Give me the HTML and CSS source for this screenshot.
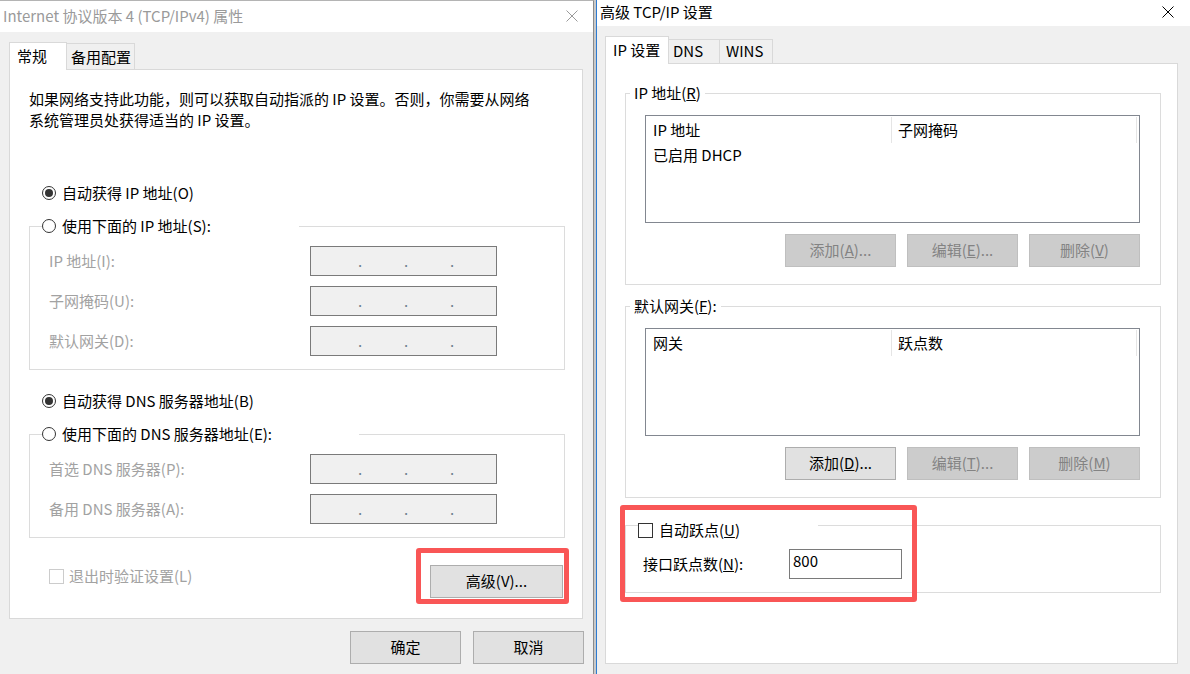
FILE: index.html
```html
<!DOCTYPE html>
<html lang="zh-CN">
<head>
<meta charset="utf-8">
<title>TCP/IP</title>
<link rel="stylesheet" href="styles.css">
</head>
<body>
<div class="page">
  <div class="win win-left">
    <div class="titlebar tb-left">
      <span class="title inactive">Internet 协议版本 4 (TCP/IPv4) 属性</span>
      <svg class="close" width="12" height="12" viewBox="0 0 12 12"><path d="M0.5 0.5L11.5 11.5M11.5 0.5L0.5 11.5" stroke="#9a9a9a" stroke-width="1" fill="none"/></svg>
    </div>
    <div class="body body-left">
      <div class="tabs tabs-left">
        <div class="tab sel t-gen">常规</div>
        <div class="tab t-alt">备用配置</div>
      </div>
      <div class="panel panel-left">
        <p class="intro">如果网络支持此功能，则可以获取自动指派的 IP 设置。否则，你需要从网络<br>系统管理员处获得适当的 IP 设置。</p>
        <div class="opt opt-first"><span class="radio on"></span><span>自动获得 IP 地址(O)</span></div>
        <fieldset class="grp grp-l">
          <legend class="lg-radio lg-ip"><span class="radio"></span><span>使用下面的 IP 地址(S):</span></legend>
          <div class="fields">
            <span class="lbl dis">IP 地址(I):</span>
            <div class="ipbox"><span>.</span><span>.</span><span>.</span></div>
            <span class="lbl dis">子网掩码(U):</span>
            <div class="ipbox"><span>.</span><span>.</span><span>.</span></div>
            <span class="lbl dis">默认网关(D):</span>
            <div class="ipbox"><span>.</span><span>.</span><span>.</span></div>
          </div>
        </fieldset>
        <div class="opt opt-second"><span class="radio on"></span><span>自动获得 DNS 服务器地址(B)</span></div>
        <fieldset class="grp grp-l grp-dns">
          <legend class="lg-radio lg-dns"><span class="radio"></span><span>使用下面的 DNS 服务器地址(E):</span></legend>
          <div class="fields">
            <span class="lbl dis">首选 DNS 服务器(P):</span>
            <div class="ipbox"><span>.</span><span>.</span><span>.</span></div>
            <span class="lbl dis">备用 DNS 服务器(A):</span>
            <div class="ipbox"><span>.</span><span>.</span><span>.</span></div>
          </div>
        </fieldset>
        <div class="bottom-row">
          <div class="chk-item dis"><span class="chk chk-dis"></span><span>退出时验证设置(L)</span></div>
          <button class="btn btn-adv">高级(V)...</button>
        </div>
      </div>
      <div class="dlg-btns">
        <button class="btn btn-dlg">确定</button>
        <button class="btn btn-dlg">取消</button>
      </div>
    </div>
  </div>

  <div class="sep"></div>

  <div class="win win-right">
    <div class="titlebar tb-right">
      <span class="title">高级 TCP/IP 设置</span>
      <svg class="close" width="12" height="12" viewBox="0 0 12 12"><path d="M0.5 0.5L11.5 11.5M11.5 0.5L0.5 11.5" stroke="#000" stroke-width="1" fill="none"/></svg>
    </div>
    <div class="body body-right">
      <div class="tabs tabs-right">
        <div class="tab sel t-ip">IP 设置</div>
        <div class="tab t-dns">DNS</div>
        <div class="tab t-wins">WINS</div>
      </div>
      <div class="panel panel-right">
        <fieldset class="grp grp-r">
          <legend class="lg-text">IP 地址(<u>R</u>)</legend>
          <div class="grp-body">
            <div class="list">
              <div class="list-head">
                <span class="col c1">IP 地址</span>
                <span class="col c2">子网掩码</span>
              </div>
              <div class="list-row">已启用 DHCP</div>
            </div>
            <div class="btn-row">
              <button class="btn btn-sm disabled">添加(<u>A</u>)...</button>
              <button class="btn btn-sm disabled">编辑(<u>E</u>)...</button>
              <button class="btn btn-sm disabled">删除(<u>V</u>)</button>
            </div>
          </div>
        </fieldset>
        <fieldset class="grp grp-r grp-gw">
          <legend class="lg-text">默认网关(<u>F</u>):</legend>
          <div class="grp-body">
            <div class="list">
              <div class="list-head">
                <span class="col c1">网关</span>
                <span class="col c2">跃点数</span>
              </div>
            </div>
            <div class="btn-row">
              <button class="btn btn-sm">添加(<u>D</u>)...</button>
              <button class="btn btn-sm disabled">编辑(<u>T</u>)...</button>
              <button class="btn btn-sm disabled">删除(<u>M</u>)</button>
            </div>
          </div>
        </fieldset>
        <fieldset class="grp grp-r grp-metric">
          <legend class="lg-chk"><span class="chk"></span><span>自动跃点(<u>U</u>)</span></legend>
          <div class="metric-row">
            <span class="lbl">接口跃点数(<u>N</u>):</span>
            <div class="txtbox">800</div>
          </div>
        </fieldset>
      </div>
    </div>
  </div>

  <div class="mark mark-l"></div>
  <div class="mark mark-r"></div>
</div>
</body>
</html>
```

FILE: styles.css
```css
* { box-sizing: border-box; }

body {
  margin: 0;
  font-family: "Noto Sans CJK SC", "Noto Sans", sans-serif;
  font-size: 15px;
  line-height: 20px;
  color: #000;
  background: #f0f0f0;
}

.page {
  position: relative;
  display: flex;
  width: 1190px;
  height: 674px;
  overflow: hidden;
  background: #f0f0f0;
}

.win { height: 674px; background: #f0f0f0; }

.win-left {
  width: 594px;
  border-top: 1px solid #b4b4b4;
  border-right: 1px solid #8c8c8c;
}

.sep { width: 2px; background: #c9c9c9; }

.win-right {
  width: 594px;
  border-left: 1px solid #2d7bd2;
}

.titlebar {
  display: flex;
  align-items: center;
  justify-content: space-between;
  background: #fff;
  padding-left: 3px;
}
.tb-left { height: 31px; padding-right: 15px; padding-bottom: 1px; }
.tb-right { height: 26px; padding-right: 16px; padding-bottom: 3px; }
.title { white-space: nowrap; }
.title.inactive { color: #9a9a9a; }
.close { display: block; flex: none; }

/* tabs */
.body-left { padding: 10px 9px 0 9px; }
.body-right { padding: 10px 0 0 8px; }

.tabs { display: flex; align-items: flex-end; }
.tabs-left { height: 27px; }
.tabs-right { height: 27px; }

.tab {
  border: 1px solid #d9d9d9;
  border-bottom: none;
  background: #f0f0f0;
  white-space: nowrap;
  margin-left: -1px;
}
.tab.sel {
  background: #fff;
  margin-left: 0;
  margin-bottom: -1px;
  position: relative;
  z-index: 1;
}
.t-gen { width: 58px; height: 28px; padding: 3px 0 0 7px; }
.t-alt { width: 69px; height: 26px; padding: 3px 0 0 4px; }
.t-ip { width: 64px; height: 28px; padding: 3px 0 0 7px; }
.t-dns { width: 52px; height: 24px; padding: 1px 0 0 4px; }
.t-wins { width: 54px; height: 24px; padding: 1px 0 0 6px; }

.panel {
  background: #fff;
  border: 1px solid #d9d9d9;
}
.panel-left { width: 574px; height: 550px; padding: 0 16px 0 19px; }
.panel-right { width: 573px; height: 601px; padding: 19px 16px 0 19px; }

/* left panel */
.intro {
  margin: 18px 0 0;
  line-height: 21px;
  white-space: nowrap;
}

.opt {
  display: flex;
  align-items: center;
  height: 20px;
  padding-left: 13px;
  gap: 6px;
  white-space: nowrap;
}
.opt-first { margin-top: 53px; }
.opt-second { margin-top: 21px; }

.radio {
  flex: none;
  width: 14px;
  height: 14px;
  border: 1px solid #333;
  border-radius: 50%;
  background: #fff;
  display: flex;
  align-items: center;
  justify-content: center;
}
.radio.on::after {
  content: "";
  width: 8px;
  height: 8px;
  border-radius: 50%;
  background: #333;
}

.chk {
  flex: none;
  width: 15px;
  height: 15px;
  border: 1px solid #333;
  background: #fff;
}
.chk-dis { border-color: #cccccc; }

.grp {
  margin: 0;
  border: 1px solid #dcdcdc;
  min-width: 0;
}
.grp-l {
  width: 536px;
  margin-top: 13px;
  padding: 10px 0 13px 12px;
}

.lg-radio {
  display: flex;
  align-items: center;
  gap: 6px;
  height: 20px;
  padding: 0;
  white-space: nowrap;
}
.lg-ip { width: 257px; }
.lg-dns { width: 317px; }

.fields {
  margin-left: 7px;
  display: grid;
  grid-template-columns: 261px 187px;
  grid-auto-rows: 30px;
  row-gap: 10px;
  align-items: center;
}
.lbl { white-space: nowrap; }
.dis { color: #a2a2a2; }

.ipbox {
  height: 30px;
  border: 1px solid #7a7a7a;
  background: #f0f0f0;
  display: flex;
  padding-left: 26px;
  line-height: 28px;
  color: #6f7f8f;
}
.ipbox span { width: 46px; text-align: center; }

.bottom-row {
  margin-top: 27px;
  width: 536px;
  display: flex;
  justify-content: space-between;
  align-items: flex-start;
  padding-right: 2px;
}
.chk-item {
  display: flex;
  align-items: center;
  gap: 5px;
  height: 20px;
  margin-top: 1px;
  margin-left: 20px;
  white-space: nowrap;
}

.btn {
  font: inherit;
  line-height: 20px;
  color: #000;
  background: #e1e1e1;
  border: 1px solid #adadad;
  padding: 0 0 1px;
  margin: 0;
  height: 33px;
  white-space: nowrap;
}
.btn-adv { width: 133px; }
.btn.disabled {
  background: #cccccc;
  border-color: #bfbfbf;
  color: #838383;
}

.dlg-btns {
  margin-top: 12px;
  display: flex;
  justify-content: flex-end;
  gap: 12px;
}
.btn-dlg { width: 111px; }

/* right panel */
.grp-r {
  width: 536px;
  padding: 12px 0 17px 4px;
}
.grp-gw { margin-top: 11px; }
.grp-metric { margin-top: 11px; padding: 8px 0 13px 4px; }

.lg-text {
  padding: 0 4px;
  height: 20px;
  line-height: 19px;
  white-space: nowrap;
}

.lg-chk {
  display: flex;
  align-items: center;
  gap: 6px;
  width: 180px;
  height: 32px;
  padding: 11px 0 1px;
  margin-left: 8px;
  white-space: nowrap;
}
.lg-chk .chk { margin-top: 1px; }

.grp-body { margin-left: 15px; width: 495px; }

.list {
  height: 108px;
  border: 1px solid #828790;
  background: #fff;
  padding-top: 1px;
}
.list-head { display: flex; height: 26px; }
.col {
  height: 26px;
  line-height: 25px;
  white-space: nowrap;
}
.c1 { width: 245px; padding-left: 7px; }
.c2 {
  width: 246px;
  padding-left: 6px;
  border-left: 1px solid #e5e5e5;
  border-right: 1px solid #e5e5e5;
}
.list-row {
  height: 26px;
  line-height: 24px;
  padding-left: 7px;
  white-space: nowrap;
}

.btn-row {
  margin-top: 11px;
  display: flex;
  justify-content: flex-end;
  gap: 11px;
}
.btn-sm { width: 111px; }

.metric-row {
  margin-left: 13px;
  display: grid;
  grid-template-columns: 146px 113px;
  align-items: center;
}
.metric-row .lbl { margin-top: -1px; }
.txtbox {
  height: 30px;
  border: 1px solid #7a7a7a;
  background: #fff;
  padding-left: 3px;
  line-height: 22px;
}

/* annotation highlights */
.mark {
  position: absolute;
  border: 5px solid #f95656;
  border-radius: 3px;
  pointer-events: none;
}
.mark-l { left: 416px; top: 548px; width: 153px; height: 56px; }
.mark-r { left: 620px; top: 505px; width: 297px; height: 97px; }
```
